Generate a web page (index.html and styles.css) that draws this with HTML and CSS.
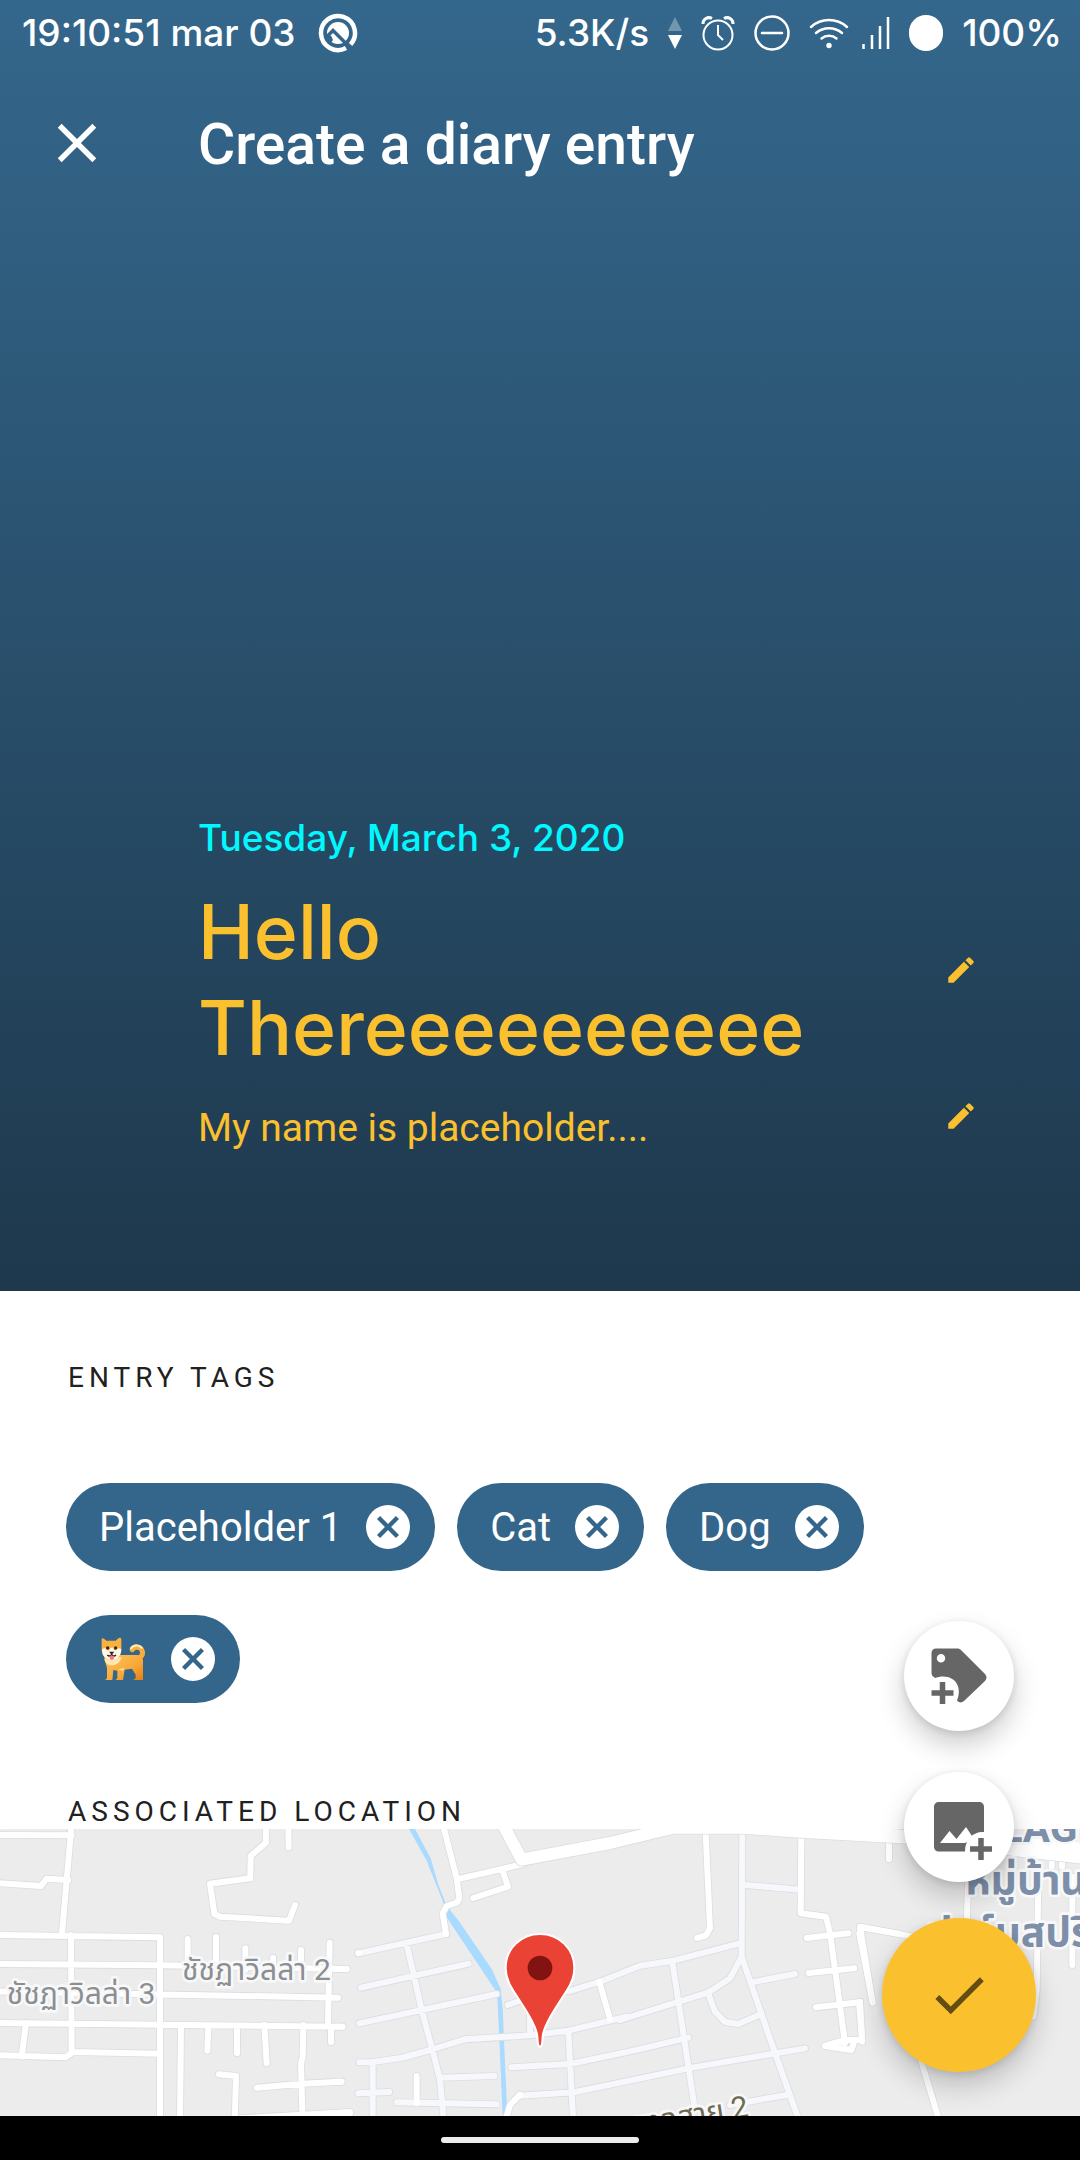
FILE: index.html
```html
<!DOCTYPE html>
<html lang="en">
<head>
<meta charset="utf-8">
<meta name="viewport" content="width=device-width, initial-scale=1">
<title>Create a diary entry</title>
<link rel="stylesheet" href="styles.css">
</head>
<body>
<header class="hero">
  <div class="status-bar">
    <div class="status-group">
      <span>19:10:51 mar 03</span>
      <svg width="40" height="40" viewBox="0 0 40 40" aria-hidden="true">
        <path d="M28 35A17 17 0 1 1 32.600 31.400" fill="none" stroke="#fff" stroke-width="4.500"/>
        <circle cx="20" cy="20" r="11" fill="#fff"/>
        <path d="M8 24.500l7-7 13 13" fill="none" stroke="#33668a" stroke-width="3.500"/>
        <path d="M8 24l5-1.500 2 4.500-3 4z" fill="#33668a"/>
      </svg>
    </div>
    <div class="status-group status-right">
      <span>5.3K/s</span>
      <svg width="14" height="32" viewBox="0 0 14 32" aria-hidden="true"><path d="M7 0l7 14H0z" fill="#7296ae"/><path d="M0 18h14L7 32z" fill="#fff"/></svg>
      <svg width="34" height="36" viewBox="0 0 34 36" fill="none" stroke="#fff" stroke-width="2" aria-hidden="true"><circle cx="17" cy="20" r="14.500"/><path d="M2 9A6 6 0 0 1 11 3.500M32 9A6 6 0 0 0 23 3.500" stroke-width="3"/><path d="M17 10v10l5 5"/></svg>
      <svg width="36" height="36" viewBox="0 0 36 36" fill="none" stroke="#fff" stroke-width="2.500" aria-hidden="true"><circle cx="18" cy="18" r="16.500"/><path d="M8 18h20" stroke-linecap="round"/></svg>
      <span class="network">
        <svg width="40" height="34" viewBox="0 0 40 34" fill="none" stroke="#fff" stroke-width="2.500" stroke-linecap="round" aria-hidden="true"><path d="M2 11a27 27 0 0 1 36 0M7 17a20 20 0 0 1 26 0M12.500 22.500a11.500 11.500 0 0 1 15 0"/><circle cx="20" cy="29.500" r="2.700" fill="#fff" stroke="none"/></svg>
        <svg width="28" height="34" viewBox="0 0 28 34" fill="none" stroke="#fff" stroke-width="2.500" aria-hidden="true"><path d="M1.500 28v5M10 19v14M18 10v23M26 1v32"/></svg>
      </span>
      <svg width="34" height="36" viewBox="0 0 34 36" aria-hidden="true"><rect width="34" height="36" rx="17" fill="#fff"/></svg>
      <span>100%</span>
    </div>
  </div>
  <div class="app-bar">
    <button class="icon-button" aria-label="Close">
      <svg width="66" height="66" viewBox="0 0 24 24" aria-hidden="true"><path fill="#fff" d="M19 6.410L17.590 5 12 10.590 6.410 5 5 6.410 10.590 12 5 17.590 6.410 19 12 13.410 17.590 19 19 17.590 13.410 12z"/></svg>
    </button>
    <h1 class="page-title">Create a diary entry</h1>
  </div>
  <div class="summary">
    <p class="date">Tuesday, March 3, 2020</p>
    <div class="field">
      <h2 class="entry-title">Hello<br>Thereeeeeeeeee</h2>
      <button class="icon-button" aria-label="Edit title">
        <svg width="34" height="34" viewBox="0 0 24 24" aria-hidden="true"><path fill="#fbc02d" d="M3 17.250V21h3.750L17.810 9.940l-3.750-3.750L3 17.250zM20.710 7.040a1 1 0 0 0 0-1.410l-2.340-2.340a1 1 0 0 0-1.410 0l-1.830 1.830 3.750 3.750 1.830-1.830z"/></svg>
      </button>
    </div>
    <div class="field">
      <p class="entry-text">My name is placeholder....</p>
      <button class="icon-button" aria-label="Edit description">
        <svg width="34" height="34" viewBox="0 0 24 24" aria-hidden="true"><path fill="#fbc02d" d="M3 17.250V21h3.750L17.810 9.940l-3.750-3.750L3 17.250zM20.710 7.040a1 1 0 0 0 0-1.410l-2.340-2.340a1 1 0 0 0-1.410 0l-1.830 1.830 3.750 3.750 1.830-1.830z"/></svg>
      </button>
    </div>
  </div>
</header>
<main class="details">
  <h3 class="overline">ENTRY TAGS</h3>
  <ul class="chips">
    <li class="chip"><span>Placeholder 1</span><button class="icon-button" aria-label="Remove Placeholder 1"><svg width="44" height="44" viewBox="2 2 20 20" aria-hidden="true"><path fill="#fff" d="M12 2a10 10 0 1 0 0 20 10 10 0 0 0 0-20zm5 13.590L15.590 17 12 13.410 8.410 17 7 15.590 10.590 12 7 8.410 8.410 7 12 10.590 15.590 7 17 8.410 13.410 12z"/></svg></button></li>
    <li class="chip"><span>Cat</span><button class="icon-button" aria-label="Remove Cat"><svg width="44" height="44" viewBox="2 2 20 20" aria-hidden="true"><path fill="#fff" d="M12 2a10 10 0 1 0 0 20 10 10 0 0 0 0-20zm5 13.590L15.590 17 12 13.410 8.410 17 7 15.590 10.590 12 7 8.410 8.410 7 12 10.590 15.590 7 17 8.410 13.410 12z"/></svg></button></li>
    <li class="chip"><span>Dog</span><button class="icon-button" aria-label="Remove Dog"><svg width="44" height="44" viewBox="2 2 20 20" aria-hidden="true"><path fill="#fff" d="M12 2a10 10 0 1 0 0 20 10 10 0 0 0 0-20zm5 13.590L15.590 17 12 13.410 8.410 17 7 15.590 10.590 12 7 8.410 8.410 7 12 10.590 15.590 7 17 8.410 13.410 12z"/></svg></button></li>
    <li class="chip">
      <svg width="48" height="44" viewBox="0 0 144 132" role="img" aria-label="Dog emoji">
        <defs><linearGradient id="fur" x1="0" y1="0" x2="1" y2="1"><stop offset="0" stop-color="#ffc35a"/><stop offset="0.600" stop-color="#f9a93a"/><stop offset="1" stop-color="#e67f0d"/></linearGradient></defs>
        <path d="M114 66c16-4 20-18 14-28-7-10-22-9-28 0" fill="none" stroke="#f9ac3c" stroke-width="15" stroke-linecap="round"/>
        <path d="M96 34c8-12 24-11 32-2" fill="none" stroke="#ffe9b5" stroke-width="7" stroke-linecap="round"/>
        <path d="M15 58l9 36v30l-6 5h22l3-30 12 2v23l-5 5h22l5-31 22-3 11 18v11l-7 5h29V78c2-18-8-24-22-24H60z" fill="url(#fur)"/>
        <path d="M16 66c4 28 42 24 52-4L44 56z" fill="#ffe6ae"/>
        <path d="M8 6c2-6 8 0 14 5h28C56 4 64-2 67 5v31c0 22-14 33-29 33S8 58 8 38z" fill="#fab13f"/>
        <path d="M9 37c5-5 14-4 20 4l6-9h7l5 9c6-8 14-9 20-4 0 20-13 32-29 32S8 57 9 37z" fill="#fff8e7"/>
        <circle cx="26" cy="33" r="5" fill="#3b2418"/><circle cx="50" cy="33" r="5" fill="#3b2418"/>
        <path d="M30 44h16l-8 9z" fill="#2b2220"/>
        <path d="M25 54q7 7 13-2 6 9 13 2" fill="none" stroke="#2b2220" stroke-width="4"/>
        <path d="M32 56h13v7c0 7-13 7-13 0z" fill="#fb7184"/>
        <path d="M58 97l18-4-4 9z" fill="#ffe6ae"/>
      </svg>
      <button class="icon-button" aria-label="Remove dog emoji"><svg width="44" height="44" viewBox="2 2 20 20" aria-hidden="true"><path fill="#fff" d="M12 2a10 10 0 1 0 0 20 10 10 0 0 0 0-20zm5 13.590L15.590 17 12 13.410 8.410 17 7 15.590 10.590 12 7 8.410 8.410 7 12 10.590 15.590 7 17 8.410 13.410 12z"/></svg></button></li>
  </ul>
  <h3 class="overline">ASSOCIATED LOCATION</h3>
</main>
<section class="map" aria-label="Map">
  <svg class="map-canvas" viewBox="0 0 3240 861" preserveAspectRatio="xMidYMin slice">
    <defs>
      <g id="west" transform="translate(0 -117)">
        <path d="M-20 135L215 136M215 100L186 430M-20 278L123 288 140 266 205 270M-20 435L480 442 480 1000M-20 522L490 526 1040 537M-20 604L1014 623M-20 699L1026 710M213 435L215 786M-20 795L196 802 220 786 480 791M78 699L65 800M797 100L798 158 752 198 751 265 630 281 643 372 660 380 867 392 885 345M865 100L866 172M563 447V530M648 440V530M736 475V540M819 503V540M903 480V540M989 458L984 700M993 710V757M543 705L540 1000M625 710L622 782M711 710V790M793 705L800 820M657 853L708 858 704 1000M770 893L907 881 1025 875M910 705L908 800 903 822 908 1000M720 985L1050 966"/>
      </g>
      <g id="canal-roads" transform="translate(1020 -117)">
        <path d="M308 100L350 265 358 325 350 338 320 348 308 370 318 432M350 268L550 222M487 240L504 290 400 324M778 575L810 687M230 858V940M540 914L510 945 494 1000M-15 537H20M55 488H56M-15 710H8M-15 875H4M-15 970H30"/>
      </g>
      <g id="minor" transform="translate(1020 -117)">
        <path d="M55 490L318 432M63 593L386 521M58 700L470 612M58 817L98 816 183 804 270 780 375 748 570 736 685 722 860 680M98 820V1000M200 462L245 660 280 790 300 870 312 1000M55 910L148 906M170 937L470 943M300 863L463 858M570 640V735M503 645L620 605 690 603 780 575 900 527 1000 512 1200 460M685 722L700 1000M514 832L690 822 880 782 1045 743M540 917L700 907 1060 832 1395 775M840 690L1104 608 1170 565 1205 500"/>
        <path d="M1207 120L1205 500 1300 775 1380 1000M1207 284L1380 299M997 515L1065 960M1235 577L1365 552M1104 608L1125 665 1155 696 1195 702 1262 673M1170 945L1350 913"/>
      </g>
      <g id="east" transform="translate(1800 -117)">
        <path d="M317 130L330 415 318 436 291 444M604 130L602 370 678 380 690 430 706 545 735 760M620 444L745 430M626 549L763 535M648 652L777 637 786 750 735 750 674 768 755 780 762 755M900 432L785 412 778 430 818 638"/>
      </g>
      <g id="far-east" transform="translate(2580 -717)">
        <path d="M87 750V808M0 1010L170 1042M0 1010L38 1238M0 1235L7 1355M180 1400L240 1600M325 860L320 1000M535 860L530 1200 520 1280M637 860V1125M575 740V830M606 740V830"/>
      </g>
      <g id="main-roads">
        <path d="M1500-30L1565 92 1830 42 2020 -4 2230-4 2400 8 2800 30 3000 58 3280 90M2560 10L3280 60"/>
      </g>
    </defs>
    <rect width="3240" height="861" fill="#ececec"/>
    <path d="M1224-6L1242-6 1293 90 1296 102 1316 170 1340 230 1378 278 1475 420 1502 480 1508 540 1522 861 1508 861 1493 520 1490 490 1440 415 1340 265 1328 215 1280 95z" fill="#a9daff"/>
    <g class="road casing"><use href="#minor"/><use href="#west"/><use href="#canal-roads"/><use href="#east"/><use href="#far-east"/></g>
    <g class="road minor"><use href="#minor"/></g>
    <g class="road"><use href="#west"/><use href="#canal-roads"/><use href="#east"/><use href="#far-east"/></g>
    <g class="road main-casing"><use href="#main-roads"/></g>
    <g class="road main"><use href="#main-roads"/></g>
    <text class="place" x="20" y="524">ชัชฏาวิลล่า 3</text>
    <text class="place" x="546" y="454">ชัชฏาวิลล่า 2</text>
    <text class="street" x="2248" y="862" text-anchor="end" transform="rotate(-9 2248 862)">พุทธมณฑลสาย 2</text>
    <g class="village">
      <text x="2820" y="40">VILLAGE</text>
      <text x="2896" y="195">หมู่บ้าน</text>
      <text x="2780" y="350">ปาล์มสปริง</text>
    </g>
    <path d="M1620 315c-58 0-103 45-103 102 0 28 10 49 24 70 30 47 61 90 70 128 3 16 0 38 9 38s6-22 9-38c9-38 40-81 70-128 14-21 24-42 24-70 0-57-45-102-103-102z" fill="#ea4335" stroke="#fff" stroke-width="6"/>
    <circle cx="1620" cy="417" r="37" fill="#811411"/>
  </svg>
</section>
<nav class="gesture-bar" aria-label="System"><span class="gesture-pill"></span></nav>
<div class="actions">
  <div class="mini-actions">
    <button class="fab" aria-label="Add tag">
      <svg width="66" height="66" viewBox="0 0 66 66" aria-hidden="true"><path fill="#666" fill-rule="evenodd" d="M10 5.500h21c2 0 3 .5 4.500 2l23.500 23.500c2 2 2 5 0 7L38 58c-2 2-5 2-7-.5C36 46 31 33.500 17 33.500c-3 0-5 .5-7.500 1.500-2-1-4-2-4-5V10c0-3 2-4.500 4.500-4.500zM15 11a4 4 0 1 0 0 8.500 4 4 0 0 0 0-8.500z"/><path d="M16.500 39v22M5.500 50h22" stroke="#666" stroke-width="5.500"/></svg>
    </button>
    <button class="fab" aria-label="Add picture">
      <svg width="66" height="66" viewBox="0 0 66 66" aria-hidden="true"><path fill="#666" d="M13 8h40c3 0 5 2 5 5v25c-10-1-19 7-19 19.500H13c-3 0-5-2-5-5V13c0-3 2-5 5-5z"/><path fill="#fff" d="M14 49L23.500 37l7 8L40 33l8 12-9 4z"/><path d="M55 44v22M44 55h22" stroke="#666" stroke-width="5.500"/></svg>
    </button>
  </div>
  <button class="fab fab-primary" aria-label="Save entry">
    <svg width="66" height="66" viewBox="0 0 24 24" aria-hidden="true"><path fill="#644d12" d="M9 16.170L4.830 12l-1.420 1.410L9 19 21 7l-1.410-1.410z"/></svg>
  </button>
</div>
</body>
</html>
```
FILE: styles.css
```css
* {
  box-sizing: border-box;
}

body {
  margin: 0;
  min-height: 100vh;
  display: flex;
  flex-direction: column;
  background: #fff;
  color: #212121;
  font-family: Roboto, "Noto Sans", sans-serif;
}

h1, h2, h3, p, ul {
  margin: 0;
  padding: 0;
  font-weight: 400;
}

.icon-button {
  display: flex;
  flex: none;
  padding: 0;
  border: 0;
  background: none;
  cursor: pointer;
}

/* Header */
.hero {
  background: linear-gradient(#34678c, #1e384c);
  color: #fff;
  padding-bottom: 137px;
}

.status-bar {
  display: flex;
  justify-content: space-between;
  align-items: center;
  height: 66px;
  padding: 0 18px 0 22px;
  font: 500 37px/44px Inter, sans-serif;
}

.status-group {
  display: flex;
  align-items: center;
  gap: 22px;
}

.status-right {
  gap: 19px;
}

.network {
  display: flex;
  gap: 13px;
}

.app-bar {
  display: flex;
  align-items: center;
  gap: 88px;
  height: 154px;
  padding: 0 44px;
}

.page-title {
  padding-top: 4px;
  font-size: 57px;
  font-weight: 500;
  line-height: 66px;
}

.summary {
  padding: 27.5vh 102px 0 198px;
}

.date {
  color: #00f8ff;
  font: 500 37px/48px Inter, sans-serif;
}

.field {
  display: flex;
  align-items: center;
  justify-content: space-between;
  color: #fbc02d;
}

.entry-title {
  padding: 22px 0 2px;
  font: 500 75px/96px Inter, sans-serif;
}

.entry-text {
  padding-top: 24px;
  font-size: 39px;
  line-height: 52px;
}

/* Tags and location */
.details {
  padding: 71px 66px 1px;
}

.overline {
  padding-left: 2px;
  font-size: 28px;
  line-height: 32px;
  letter-spacing: 5px;
}

.chips {
  display: flex;
  flex-wrap: wrap;
  gap: 44px 22px;
  padding: 89px 0 93px;
  list-style: none;
}

.chip {
  display: flex;
  align-items: center;
  gap: 24px;
  height: 88px;
  padding: 0 25px 0 33px;
  border-radius: 44px;
  background: #34658a;
  color: #fff;
  font-size: 40px;
}

/* Map */
.map {
  flex: 1 0 287px;
  height: 287px;
  overflow: hidden;
  background: #ececec;
}

.map-canvas {
  display: block;
  width: 100%;
  height: 100%;
}

.road {
  fill: none;
  stroke: #fff;
  stroke-width: 18px;
  stroke-linecap: round;
  stroke-linejoin: round;
}

.casing {
  stroke: #dcdde3;
  stroke-width: 23px;
}

.minor {
  stroke: #f7f8fb;
}

.main {
  stroke-width: 36px;
}

.main-casing {
  stroke: #dcdde3;
  stroke-width: 41px;
}

.place, .street, .village {
  font-family: Roboto, "Noto Sans Thai", "Noto Sans", sans-serif;
  font-size: 90px;
  fill: #8a8f94;
  stroke: #f8f8f8;
  stroke-width: 16px;
  stroke-linejoin: round;
  paint-order: stroke;
}

.street {
  fill: #6e6a55;
}

.village {
  font-size: 122px;
  font-weight: 700;
  fill: #7d8fa9;
}

/* System navigation */
.gesture-bar {
  display: flex;
  justify-content: center;
  align-items: center;
  height: 44px;
  padding-top: 4px;
  background: #000;
}

.gesture-pill {
  width: 198px;
  height: 6px;
  border-radius: 3px;
  background: #ececec;
}

/* Floating actions */
.actions {
  position: fixed;
  right: 44px;
  bottom: 88px;
  display: flex;
  flex-direction: column;
  align-items: center;
  gap: 36px;
}

.mini-actions {
  display: flex;
  flex-direction: column;
  gap: 41px;
}

.fab {
  display: flex;
  align-items: center;
  justify-content: center;
  width: 110px;
  height: 110px;
  padding: 0;
  border: 0;
  border-radius: 50%;
  background: #fff;
  box-shadow: 0 14px 28px rgba(0, 0, 0, 0.2), 0 2px 8px rgba(0, 0, 0, 0.12);
  cursor: pointer;
}

.fab-primary {
  width: 154px;
  height: 154px;
  background: #fbc02d;
}
```
